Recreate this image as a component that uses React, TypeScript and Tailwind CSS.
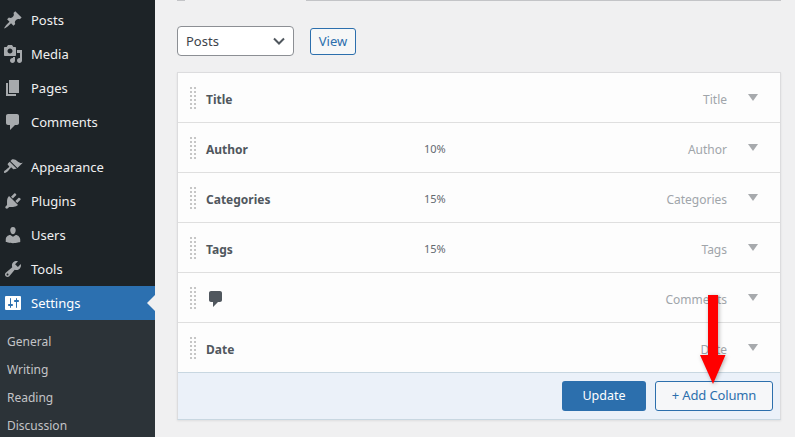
const ICONS = {
  posts: "M10.44 3.02l1.82-1.82 6.36 6.35-1.83 1.82c-1.05-.68-2.48-.57-3.41.36l-.75.75c-.92.93-1.04 2.35-.35 3.41l-1.83 1.82-2.41-2.41-2.8 2.79c-.42.42-3.38 2.71-3.8 2.29s1.86-3.39 2.28-3.81l2.79-2.79L4.1 9.36l1.83-1.82c1.05.69 2.48.57 3.4-.36l.75-.75c.93-.92 1.05-2.35.36-3.41z",
  media: "M13 11V4c0-.55-.45-1-1-1h-1.67L9 1H5L3.67 3H2c-.55 0-1 .45-1 1v7c0 .55.45 1 1 1h10c.55 0 1-.45 1-1zM7 4.5c1.38 0 2.5 1.12 2.5 2.5S8.38 9.5 7 9.5 4.5 8.38 4.5 7 5.62 4.5 7 4.5zM14 6h5v10.5c0 1.38-1.12 2.5-2.5 2.5S14 17.88 14 16.5s1.12-2.5 2.5-2.5c.17 0 .34.02.5.05V9h-3V6zm-4 8.05V13h2v3.5c0 1.38-1.12 2.5-2.5 2.5S7 17.88 7 16.5 8.12 14 9.5 14c.17 0 .34.02.5.05z",
  pages: "M6 15V2h10v13H6zm-1 1h8v2H3V5h2v11z",
  comments: "M5 2h9c1.1 0 2 .9 2 2v7c0 1.1-.9 2-2 2h-2l-5 5v-5H5c-1.1 0-2-.9-2-2V4c0-1.1.9-2 2-2z",
  appearance: "M14.48 11.06L7.41 3.99l1.5-1.5c.5-.56 2.3-.47 3.51.32 1.21.8 1.43 1.28 2.91 2.1 1.18.64 2.45 1.26 4.45.85zm-.71.71L6.7 4.7 4.93 6.47c-.39.39-.39 1.02 0 1.41l1.06 1.06c.39.39.39 1.03 0 1.42-.6.6-1.43 1.11-2.21 1.69-.35.26-.7.53-1.01.84C1.43 13.23.4 14.89 1.2 15.68s2.46-.24 3.82-1.56c.32-.32.59-.66.85-1.01.57-.79 1.09-1.61 1.69-2.21.39-.39 1.02-.39 1.41 0l1.06 1.06c.39.39 1.02.39 1.41 0z",
  plugins: "M13.11 4.36L9.87 7.6 8 5.73l3.24-3.24c.35-.34 1.05-.2 1.56.32.52.51.66 1.21.31 1.55zm-8 1.77l.91-1.12 9.01 9.01-1.19.84c-.71.71-2.63 1.16-3.82 1.16H6.14L4.9 17.26c-.59.59-1.54.59-2.12 0-.59-.58-.59-1.53 0-2.12l1.24-1.24v-3.88c0-1.13.4-3.19 1.09-3.89zm7.26 3.97l3.24-3.24c.34-.35 1.04-.21 1.55.31.52.51.66 1.21.31 1.55l-3.24 3.25z",
  users: "M10 9.25c-2.27 0-2.73-3.44-2.73-3.44C7 4.02 7.82 2 9.97 2c2.16 0 2.98 2.02 2.71 3.81 0 0-.41 3.44-2.68 3.44zm0 2.57L12.72 10c2.39 0 4.52 2.33 4.52 4.53v2.49s-3.65 1.13-7.24 1.13c-3.65 0-7.24-1.13-7.24-1.13v-2.49c0-2.25 1.94-4.48 4.47-4.48z",
  tools: "M16.68 9.77c-1.34 1.34-3.3 1.67-4.95.99l-5.41 6.52c-.99.99-2.59.99-3.58 0s-.99-2.59 0-3.57l6.52-5.42c-.68-1.65-.35-3.61.99-4.95 1.28-1.28 3.12-1.62 4.72-1.06l-2.89 2.89 2.82 2.82 2.86-2.87c.53 1.58.18 3.39-1.08 4.65zM3.81 16.21c.4.39 1.04.39 1.43 0 .4-.4.4-1.04 0-1.43-.39-.4-1.03-.4-1.43 0-.39.39-.39 1.03 0 1.43z",
};

function Dash({ d, className }: { d: string; className: string }) {
  return (
    <svg viewBox="0 0 20 20" width="20" height="20" className={className} fill="currentColor">
      <path d={d} />
    </svg>
  );
}

function SettingsIcon() {
  return (
    <svg viewBox="0 0 20 20" width="20" height="20">
      <rect x="2" y="3" width="16" height="14" rx="1" fill="#ffffff" />
      <path
        fill="#2c70b0"
        d="M8 11h1c.55 0 1 .45 1 1s-.45 1-1 1H8v1.5c0 .28-.22.5-.5.5s-.5-.22-.5-.5V13H6c-.55 0-1-.45-1-1s.45-1 1-1h1V5.5c0-.28.22-.5.5-.5s.5.22.5.5V11zm5-2h-1c-.55 0-1-.45-1-1s.45-1 1-1h1V5.5c0-.28.22-.5.5-.5s.5.22.5.5V7h1c.55 0 1 .45 1 1s-.45 1-1 1h-1v5.5c0 .28-.22.5-.5.5s-.5-.22-.5-.5V9z"
      />
    </svg>
  );
}

function MenuItem({ icon, label }: { icon: string; label: string }) {
  return (
    <div className="flex h-[34px] shrink-0 items-center pl-[3px]">
      <Dash d={icon} className="text-[#a7aaad]" />
      <span className="ml-2 mt-[2px] text-[13px] text-[#f0f0f1]">{label}</span>
    </div>
  );
}

function Grip() {
  const dots = [0, 4, 8, 12, 16, 20];
  return (
    <svg width="6" height="22" viewBox="0 0 6 22" className="text-[#c6c6c6]" fill="currentColor">
      {dots.map((y) => (
        <g key={y}>
          <rect x="0" y={y} width="2" height="2" />
          <rect x="4" y={y} width="2" height="2" />
        </g>
      ))}
    </svg>
  );
}

function Row({ title, width, label, icon, last }: { title?: string; width?: string; label: string; icon?: boolean; last?: boolean }) {
  return (
    <div className={last ? "flex h-[50px] items-center border-b border-[#c8d7e1] pl-3 pr-[22px]" : "flex h-[50px] items-center border-b border-[#dfdfdf] pl-3 pr-[22px]"}>
      <Grip />
      {icon ? (
        <div className="ml-[10px] mt-[3px] w-[218px]">
          <Dash d={ICONS.comments} className="text-[#50575e]" />
        </div>
      ) : (
        <div className="ml-[10px] mt-[5px] w-[218px] text-[12px] font-bold text-[#50575e]">{title}</div>
      )}
      <div className="mt-[3px] w-[60px] text-[11px] text-[#646970]">{width}</div>
      <div className="ml-auto mt-[5px] text-[12px] text-[#a0a5aa]">{label}</div>
      <div className="ml-[21px] h-0 w-0 border-x-[5px] border-t-[7px] border-x-transparent border-t-[#a7aaad]" />
    </div>
  );
}

export default function App() {
  return (
    <div className="relative flex h-[437px] w-[795px] overflow-hidden bg-[#f0f0f1] font-['Noto_Sans','Open_Sans',sans-serif]">
      <aside className="flex h-[437px] w-[155px] shrink-0 flex-col overflow-hidden bg-[#1d2327] pt-[3px]">
        <MenuItem icon={ICONS.posts} label="Posts" />
        <MenuItem icon={ICONS.media} label="Media" />
        <MenuItem icon={ICONS.pages} label="Pages" />
        <MenuItem icon={ICONS.comments} label="Comments" />
        <div className="h-[11px] shrink-0" />
        <MenuItem icon={ICONS.appearance} label="Appearance" />
        <MenuItem icon={ICONS.plugins} label="Plugins" />
        <MenuItem icon={ICONS.users} label="Users" />
        <MenuItem icon={ICONS.tools} label="Tools" />
        <div className="relative flex h-[34px] shrink-0 items-center bg-[#2c70b0] pl-[3px]">
          <SettingsIcon />
          <span className="ml-2 mt-[2px] text-[13px] text-white">Settings</span>
          <div className="absolute right-0 top-[9px] h-0 w-0 border-y-[8px] border-r-[8px] border-y-transparent border-r-[#f0f0f1]" />
        </div>
        <div className="flex flex-1 shrink-0 flex-col bg-[#2c3338] pt-[7px] text-[12px] text-[#c3c4c7]">
          {["General", "Writing", "Reading", "Discussion"].map((s) => (
            <div key={s} className="flex h-[28px] shrink-0 items-center pl-[7px] pt-[2px]">{s}</div>
          ))}
        </div>
      </aside>
      <main className="min-w-0 flex-1 pl-[22px] pr-[14px]">
        <div className="flex h-px">
          <div className="w-[8px] bg-[#c3c4c7]" />
          <div className="w-[121px]" />
          <div className="flex-1 bg-[#c3c4c7]" />
        </div>
        <div className="mt-[25px] flex items-center">
          <div className="flex h-[30px] w-[117px] items-center justify-between rounded-[4px] border border-[#8c8f94] bg-white pl-2 pr-[8px] text-[13px] text-[#3c434a]">
            <span className="mt-[2px]">Posts</span>
            <svg width="12" height="8" viewBox="0 0 12 8" fill="none" stroke="#50575e" strokeWidth="2">
              <path d="M1 1.5l5 5 5-5" />
            </svg>
          </div>
          <div className="ml-4 flex h-[27px] w-[46px] items-center justify-center rounded-[3px] border border-[#2c6fad] bg-[#f6f7f7] text-[13px] text-[#2c6fad]">
            <span className="mt-[2px]">View</span>
          </div>
        </div>
        <div className="mt-[16px] w-[604px] border border-t-[#dcdcde] border-x-[#dcdcde] border-b-[#c8d7e1] shadow-[0_1px_2px_rgba(0,0,0,0.08)]">
          <div className="bg-[#fdfdfd]">
            <Row title="Title" label="Title" />
            <Row title="Author" width="10%" label="Author" />
            <Row title="Categories" width="15%" label="Categories" />
            <Row title="Tags" width="15%" label="Tags" />
            <Row icon label="Comments" />
            <Row title="Date" label="Date" last />
          </div>
          <div className="flex h-[46px] items-center justify-end gap-[9px] bg-[#ebf1f9] pr-[7px]">
            <div className="flex h-[30px] w-[84px] items-center justify-center rounded-[3px] bg-[#2c6fad] text-[12.5px] text-white">Update</div>
            <div className="flex h-[30px] w-[118px] items-center justify-center rounded-[3px] border border-[#2c6fad] bg-[#f6f7f9] text-[13px] tracking-[-0.15px] text-[#2c6fad]">+ Add Column</div>
          </div>
        </div>
      </main>
      <svg className="absolute left-[698px] top-[295px] drop-shadow-[1px_1px_2px_rgba(0,0,0,0.3)]" width="30" height="90" viewBox="0 0 30 90" fill="#ff0000">
        <path d="M10 0h10v60h7.5L15 89 2 60h8z" />
      </svg>
    </div>
  );
}
